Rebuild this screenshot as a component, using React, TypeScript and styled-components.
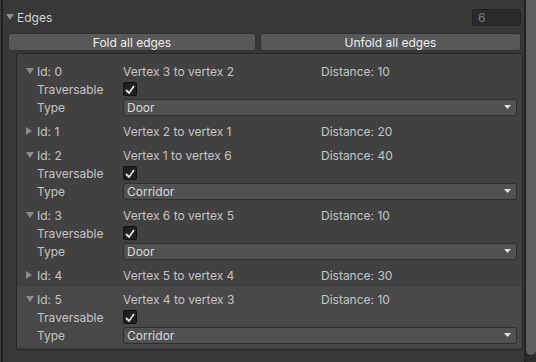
import React from "react";
import styled, { createGlobalStyle } from "styled-components";

const Global = createGlobalStyle`
  html, body { margin: 0; padding: 0; background: #383838; }
  body { font-family: Inter, "Noto Sans", sans-serif; font-size: 12px; color: #c4c4c4; }
  * { box-sizing: border-box; }
`;

const Frame = styled.div`
  width: 536px;
  height: 362px;
  display: flex;
  overflow: hidden;
  background: #383838;
  padding-left: 1px;
`;

const Main = styled.div`
  flex: 1;
  display: flex;
  flex-direction: column;
  border-left: 2px solid #232323;
  padding-top: 8px;
`;

const HeaderRow = styled.div`
  height: 18px;
  display: flex;
  align-items: center;
  padding: 0 3px 0 3px;
`;

const Title = styled.span`
  flex: 1;
  color: #d2d2d2;
  margin-left: 3px;
`;

const IntField = styled.div`
  width: 49px;
  height: 17px;
  background: #2a2a2a;
  border: 1px solid #212121;
  border-radius: 3px;
  color: #7d7d7d;
  padding-left: 5px;
  line-height: 15px;
`;

const ButtonRow = styled.div`
  display: flex;
  gap: 4px;
  margin: 7px 3px 0 5px;
`;

const Button = styled.div<{ $w: number }>`
  width: ${(p) => p.$w}px;
  height: 18px;
  background: #585858;
  border: 1px solid #303030;
  border-radius: 3px;
  color: #eeeeee;
  display: flex;
  align-items: center;
  justify-content: center;
`;

const Box = styled.div`
  margin: 2px 1px 0 13px;
  background: #414141;
  border: 1px solid #262626;
  border-radius: 2px;
  padding: 5px 0 2px 0;
  display: flex;
  flex-direction: column;
`;

const Element = styled.div<{ $hl?: boolean }>`
  padding: 3px 5px 3px 9px;
  background: ${(p) => (p.$hl ? "#484848" : "transparent")};
  display: flex;
  flex-direction: column;
`;

const Row = styled.div`
  height: 18px;
  display: flex;
  align-items: center;
`;

const Arrow = styled.span`
  width: 11px;
  display: flex;
  align-items: center;
`;

const Label = styled.span<{ $indent?: boolean }>`
  width: ${(p) => (p.$indent ? 97 : 86)}px;
  padding-left: ${(p) => (p.$indent ? 11 : 0)}px;
  flex-shrink: 0;
`;

const Vertex = styled.span`
  width: 198px;
`;

const Check = styled.div`
  width: 14px;
  height: 14px;
  background: #202020;
  border: 1px solid #111111;
  border-radius: 2px;
  display: flex;
  align-items: center;
  justify-content: center;
`;

const Dropdown = styled.div`
  flex: 1;
  height: 17px;
  background: #515151;
  border: 1px solid #2e2e2e;
  border-radius: 3px;
  display: flex;
  align-items: center;
  padding: 0 5px 0 3px;
  color: #dadada;
`;

const DropText = styled.span`
  flex: 1;
`;

const Scrollbar = styled.div`
  width: 12px;
  border-left: 2px solid #232323;
  background: #2c2c2c;
  display: flex;
  flex-direction: column;
`;

const Thumb = styled.div`
  height: 355px;
  background: #5e5e5e;
  border-radius: 0 0 5px 5px;
`;

const Down = () => (
  <svg width="8" height="6" viewBox="0 0 8 6">
    <polygon points="0,0 8,0 4,6" fill="#8c8c8c" />
  </svg>
);
const Right = () => (
  <svg width="6" height="8" viewBox="0 0 6 8">
    <polygon points="0,0 6,4 0,8" fill="#8c8c8c" />
  </svg>
);
const Tick = () => (
  <svg width="10" height="9" viewBox="0 0 10 9">
    <polyline points="1,5 4,8 9,1" fill="none" stroke="#e0e0e0" strokeWidth="1.8" />
  </svg>
);
const DropArrow = () => (
  <svg width="7" height="4" viewBox="0 0 7 4">
    <polygon points="0,0 7,0 3.5,4" fill="#e0e0e0" />
  </svg>
);

type Edge = { id: number; from: number; to: number; dist: number; open: boolean; type?: string; hl?: boolean };

const edges: Edge[] = [
  { id: 0, from: 3, to: 2, dist: 10, open: true, type: "Door" },
  { id: 1, from: 2, to: 1, dist: 20, open: false },
  { id: 2, from: 1, to: 6, dist: 40, open: true, type: "Corridor" },
  { id: 3, from: 6, to: 5, dist: 10, open: true, type: "Door" },
  { id: 4, from: 5, to: 4, dist: 30, open: false },
  { id: 5, from: 4, to: 3, dist: 10, open: true, type: "Corridor", hl: true },
];

export default function App() {
  return (
    <>
      <Global />
      <Frame>
        <Main>
          <HeaderRow>
            <Down />
            <Title>Edges</Title>
            <IntField>6</IntField>
          </HeaderRow>
          <ButtonRow>
            <Button $w={248}>Fold all edges</Button>
            <Button $w={261}>Unfold all edges</Button>
          </ButtonRow>
          <Box>
            {edges.map((e) => (
              <Element key={e.id} $hl={e.hl}>
                <Row>
                  <Arrow>{e.open ? <Down /> : <Right />}</Arrow>
                  <Label>Id: {e.id}</Label>
                  <Vertex>
                    Vertex {e.from} to vertex {e.to}
                  </Vertex>
                  <span>Distance: {e.dist}</span>
                </Row>
                {e.open && (
                  <>
                    <Row>
                      <Label $indent>Traversable</Label>
                      <Check>
                        <Tick />
                      </Check>
                    </Row>
                    <Row>
                      <Label $indent>Type</Label>
                      <Dropdown>
                        <DropText>{e.type}</DropText>
                        <DropArrow />
                      </Dropdown>
                    </Row>
                  </>
                )}
              </Element>
            ))}
          </Box>
        </Main>
        <Scrollbar>
          <Thumb />
        </Scrollbar>
      </Frame>
    </>
  );
}
